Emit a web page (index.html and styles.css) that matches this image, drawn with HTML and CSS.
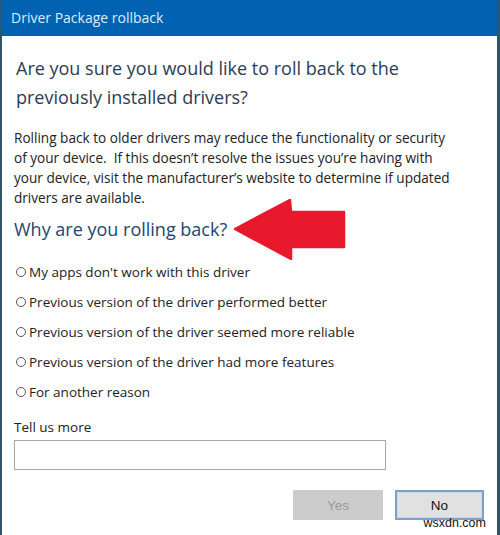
FILE: index.html
```html
<!DOCTYPE html>
<html>
<head>
<meta charset="utf-8">
<link rel="stylesheet" href="styles.css">
</head>
<body>
<div class="window">
  <div class="titlebar">Driver Package rollback</div>
  <div class="content">
    <h1 class="question">Are you sure you would like to roll back to the<br>previously installed drivers?</h1>
    <p class="desc">Rolling back to older drivers may reduce the functionality or security<br>of your device.&nbsp; If this doesn’t resolve the issues you’re having with<br>your device, visit the manufacturer’s website to determine if updated<br>drivers are available.</p>
    <h2 class="why">Why are you rolling back?</h2>
    <ul class="options">
      <li class="option"><span class="radio"></span>My apps don't work with this driver</li>
      <li class="option"><span class="radio"></span>Previous version of the driver performed better</li>
      <li class="option"><span class="radio"></span>Previous version of the driver seemed more reliable</li>
      <li class="option"><span class="radio"></span>Previous version of the driver had more features</li>
      <li class="option"><span class="radio"></span>For another reason</li>
    </ul>
    <div class="label">Tell us more</div>
    <div class="input"></div>
    <div class="buttons">
      <div class="btn btn-yes">Yes</div>
      <div class="btn btn-no">No</div>
    </div>
  </div>
  <svg class="arrow" width="112" height="62" viewBox="0 0 112 62">
    <polygon points="1,30 56,1 57,13 110,13 110,48 57,48 57,60" fill="#e8192c" stroke="#e8192c" stroke-width="2.5" stroke-linejoin="round"/>
  </svg>
  <div class="watermark">wsxdn.com</div>
</div>
</body>
</html>
```
FILE: styles.css
```css
html, body {
  margin: 0;
  padding: 0;
  background: #ffffff;
}
.window {
  position: relative;
  width: 500px;
  height: 535px;
  box-sizing: border-box;
  border-left: 2px solid #2e5669;
  border-right: 3px solid #2e5669;
  background: #ffffff;
  font-family: "Open Sans", "Noto Sans", sans-serif;
  overflow: hidden;
}
.titlebar {
  height: 36px;
  line-height: 36px;
  background: #0062b0;
  color: #dcedfc;
  font-size: 14px;
  padding-left: 9px;
}
.content {
  padding: 0 13px 0 12px;
}
.question {
  margin: 18px 0 0 2px;
  font-size: 18px;
  font-weight: normal;
  line-height: 29px;
  color: #2b3c56;
}
.desc {
  margin: 16px 0 0 0;
  font-size: 13.6px;
  line-height: 20px;
  color: #222222;
}
.why {
  margin: 7px 0 0 0;
  font-size: 18px;
  font-weight: normal;
  line-height: 28px;
  color: #22466f;
}
.options {
  list-style: none;
  margin: 14px 0 0 0;
  padding: 0;
}
.option {
  display: flex;
  align-items: center;
  height: 30px;
  font-size: 13.5px;
  color: #222222;
}
.radio {
  width: 8px;
  height: 8px;
  border: 1px solid #555555;
  border-radius: 50%;
  margin: 0 3px 0 2px;
  flex: none;
}
.label {
  margin-top: 10px;
  line-height: 20px;
  font-size: 13.5px;
  color: #222222;
}
.input {
  margin-top: 3px;
  width: 372px;
  height: 30px;
  box-sizing: border-box;
  border: 1px solid #a8a8a8;
}
.buttons {
  display: flex;
  justify-content: flex-end;
  gap: 12px;
  margin-top: 20px;
}
.btn {
  height: 30px;
  box-sizing: border-box;
  display: flex;
  align-items: center;
  justify-content: center;
  font-family: "Liberation Sans", Arial, sans-serif;
  font-size: 13.5px;
}
.btn-yes {
  width: 90px;
  background: #cccccc;
  color: #9a9a9a;
}
.btn-no {
  width: 89px;
  background: #e1e1e1;
  color: #111111;
  border: 2px solid #7fa0c8;
  box-shadow: inset 0 0 0 1px #c9d8ea;
}
.arrow {
  position: absolute;
  left: 232px;
  top: 199px;
}
.watermark {
  position: absolute;
  right: 11px;
  bottom: 5px;
  font-family: "Liberation Sans", Arial, sans-serif;
  font-size: 12.5px;
  color: #111111;
  line-height: 14px;
}
```
